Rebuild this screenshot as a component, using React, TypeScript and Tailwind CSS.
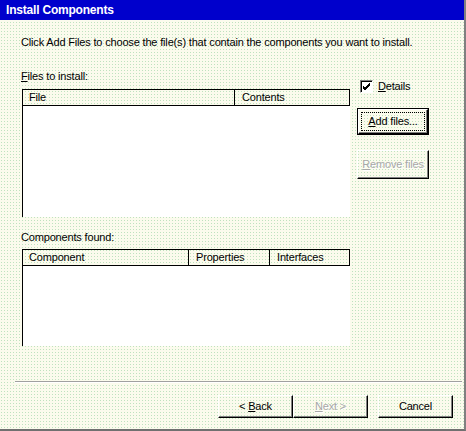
import React from "react";

const BG =
  "bg-[#fbfbed] bg-[radial-gradient(circle,#bfe2bf_0.8px,transparent_1px)] bg-size-[3px_3px]";

function Btn({
  children,
  className = "",
  disabled = false,
}: {
  children: React.ReactNode;
  className?: string;
  disabled?: boolean;
}) {
  return (
    <div
      className={`flex items-center justify-center border border-t-white border-l-white border-b-black border-r-black shadow-[inset_-1px_-1px_0_#808080] ${
        disabled ? "text-[#a8a8a8] [text-shadow:1px_1px_0_#ffffff]" : "text-black"
      } ${className}`}
    >
      {children}
    </div>
  );
}

function HeaderCell({
  children,
  className = "",
}: {
  children: React.ReactNode;
  className?: string;
}) {
  return (
    <div className={`h-full border-r border-black leading-[15px] ${className}`}>
      {children}
    </div>
  );
}

export default function App() {
  return (
    <div
      className={`w-[466px] h-[431px] overflow-hidden flex flex-col font-['Liberation_Sans',Arial,sans-serif] text-[11px] tracking-[-0.17px] text-black ${BG} border-r-2 border-r-[#808080] border-b-2 border-b-[#707070]`}
    >
      {/* Title bar */}
      <div className="h-[20px] shrink-0 bg-[#0000cc] text-white font-bold text-[12px] tracking-[-0.2px] pl-[6px] flex items-center">
        Install Components
      </div>

      <div className="flex flex-col pl-[21px]">
        <div className="mt-[16px] h-[13px] leading-[13px] whitespace-nowrap">
          Click Add Files to choose the file(s) that contain the components you want to install.
        </div>

        <div className="flex mt-[21px]">
          {/* Left column */}
          <div className="w-[329px] flex flex-col">
            <div className="h-[13px] leading-[13px]">
              <span className="underline">F</span>iles to install:
            </div>
            <div className="mt-[6px] ml-[1px] w-[328px] h-[128px] border-l border-t border-black flex flex-col">
              <div className="h-[16px] shrink-0 border-b border-black flex">
                <HeaderCell className="w-[212px] pl-[6px]">File</HeaderCell>
                <HeaderCell className="flex-1 pl-[7px]">Contents</HeaderCell>
              </div>
              <div className="flex-1 bg-white" />
            </div>

            <div className="mt-[14px] h-[13px] leading-[13px]">Components found:</div>
            <div className="mt-[5px] ml-[1px] w-[328px] h-[97px] border-l border-t border-black flex flex-col">
              <div className="h-[16px] shrink-0 border-b border-black flex">
                <HeaderCell className="w-[166px] pl-[6px]">Component</HeaderCell>
                <HeaderCell className="w-[81px] pl-[7px]">Properties</HeaderCell>
                <HeaderCell className="flex-1 pl-[7px]">Interfaces</HeaderCell>
              </div>
              <div className="flex-1 bg-white" />
            </div>
          </div>

          {/* Right column */}
          <div className="ml-[7px] flex flex-col">
            <div className="mt-[10px] h-[13px] flex items-center">
              <span className="ml-[3px] w-[13px] h-[13px] bg-white border-t border-l border-[#808080] border-b border-r border-b-white border-r-white shadow-[inset_1px_1px_0_#000000] flex items-center justify-center">
                <svg width="9" height="9" viewBox="0 0 9 9" className="block">
                  <path d="M1 4 L3 6 L8 1 M1 5 L3 7 L8 2 M1 6 L3 8 L8 3" stroke="#000" strokeWidth="1" fill="none" shapeRendering="crispEdges" />
                </svg>
              </span>
              <span className="ml-[5px] leading-[13px]">
                <span className="underline">D</span>etails
              </span>
            </div>

            <div className="mt-[15px] w-[72px] h-[27px] border border-black">
              <div className="h-full border border-t-white border-l-white border-b-black border-r-black shadow-[inset_-1px_-1px_0_#808080] p-[2px]">
                <div className="h-full border border-dotted border-black flex items-center justify-center">
                  <span>
                    <span className="underline">A</span>dd files...
                  </span>
                </div>
              </div>
            </div>

            <Btn disabled className="mt-[15px] w-[72px] h-[29px]">
              <span>
                <span className="underline">R</span>emove files
              </span>
            </Btn>
          </div>
        </div>
      </div>

      {/* Separator */}
      <div className="mt-[35px] ml-[15px] mr-[2px] h-[2px] border-t border-t-[#a0a0a0] border-b border-b-white" />

      {/* Bottom buttons */}
      <div className="mt-[12px] flex pl-[218px]">
        <Btn className="w-[75px] h-[23px]">
          <span>
            &lt; <span className="underline">B</span>ack
          </span>
        </Btn>
        <Btn disabled className="w-[75px] h-[23px]">
          <span>
            <span className="underline">N</span>ext &gt;
          </span>
        </Btn>
        <Btn className="ml-[10px] w-[75px] h-[23px]">Cancel</Btn>
      </div>
    </div>
  );
}
